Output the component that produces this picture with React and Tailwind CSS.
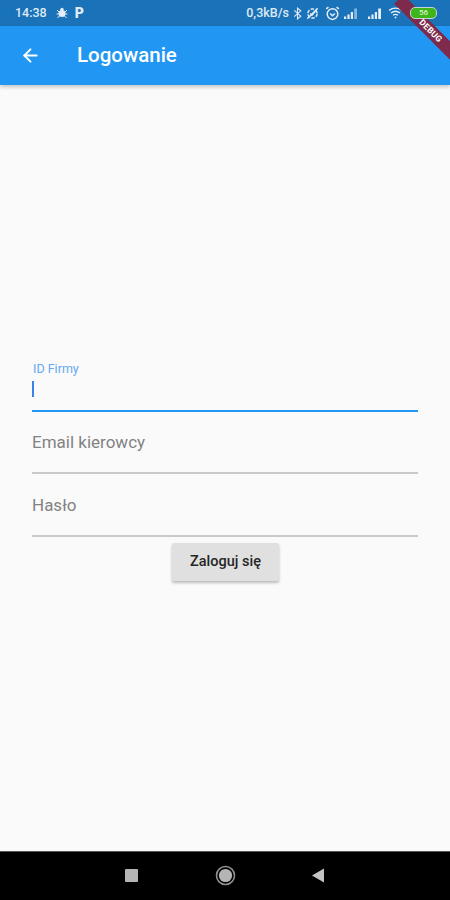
import { ArrowLeft } from 'lucide-react'

function Signal({ full }) {
  return (
    <svg width="15" height="12" viewBox="0 0 15 12" fill="#e3eef8">
      <path d="M1 9.5h2.2V12H1zM4.4 7.5h2.2V12H4.4zM7.8 5h2.2v7H7.8z" />
      <path d="M11.2 1.5h2.8V12h-2.8z" opacity={full ? 1 : 0.55} />
    </svg>
  )
}

function StatusBar() {
  return (
    <div className="h-[26px] bg-[#1a72b8] flex items-center pl-[15px] pr-[13px] text-[#dfeaf5] font-['Roboto',sans-serif]">
      <span className="text-[12.5px] font-medium">14:38</span>
      <svg className="ml-[9px]" width="12" height="12" viewBox="0 0 12 12" fill="#e3eef8">
        <circle cx="6" cy="6.5" r="3.6" />
        <circle cx="6" cy="2.4" r="1.7" />
        <path d="M1 3l2 2M11 3L9 5M.6 7h2M11.4 7h-2M1.4 11l2-2M10.6 11l-2-2" stroke="#e3eef8" strokeWidth="1" />
      </svg>
      <span className="ml-[7px] text-[14px] font-black leading-none">P</span>
      <div className="ml-auto flex items-center">
        <span className="text-[12.5px] font-medium">0,3kB/s</span>
        <svg className="ml-[4px]" width="9" height="13" viewBox="0 0 8 12" fill="none" stroke="#e3eef8" strokeWidth="1">
          <path d="M1 3.2l6 5.3L4 11V1l3 2.5L1 8.8" />
        </svg>
        <svg className="ml-[3px]" width="15" height="15" viewBox="0 0 13 13" fill="none" stroke="#e3eef8" strokeWidth="1.3">
          <circle cx="6.5" cy="6.5" r="4" strokeDasharray="3 1.2" />
          <path d="M4.5 6.5l1.5 1.5 3-3.5M2 11L11 2" />
        </svg>
        <svg className="ml-[5px]" width="15" height="15" viewBox="0 0 13 13" fill="none" stroke="#e3eef8" strokeWidth="1.3">
          <circle cx="6.5" cy="7" r="4.6" />
          <path d="M4.5 6.5l2 2 2-2M1 2.5L3 1M12 2.5L10 1" />
        </svg>
        <div className="ml-[3px]"><Signal /></div>
        <div className="ml-[9px]"><Signal full /></div>
        <svg className="ml-[6px]" width="15" height="12" viewBox="0 0 15 12" fill="none" stroke="#e3eef8" strokeWidth="1.3">
          <path d="M1 3.5C4.8.4 10.2.4 14 3.5M3 6c2.8-2.2 6.2-2.2 9 0M5 8.3c1.6-1.2 3.4-1.2 5 0" />
          <circle cx="7.5" cy="10.5" r="0.9" fill="#e3eef8" stroke="none" />
        </svg>
        {/* room for the battery, which sits over the banner */}
        <div className="ml-[7px] w-[27px]" />
      </div>
    </div>
  )
}

function Field({ label, focused }) {
  return (
    <div className={`mx-[32px] h-[62.5px] flex flex-col justify-end border-b-2 ${focused ? 'border-[#2196f3]' : 'border-[#c9c9c9]'}`}>
      {focused ? (
        <div className="h-[48px] flex flex-col">
          <span className="pl-[1px] text-[12.5px] leading-[14px] text-[#64a9f0]">{label}</span>
          <span className="mt-[5px] w-[2px] h-[16px] bg-[#3b82e8]" />
        </div>
      ) : (
        <span className="text-[17px] leading-[20px] mb-[20px] text-[#828282]">{label}</span>
      )}
    </div>
  )
}

export default function App() {
  return (
    <div className="relative w-[450px] h-[900px] overflow-hidden flex flex-col bg-[#fafafa] font-['Roboto',sans-serif]">
      <StatusBar />
      <header className="h-[59px] bg-[#2196f3] flex items-center shadow-[0_2px_4px_rgba(0,0,0,0.22)] z-10">
        <ArrowLeft className="ml-[20px] text-white" size={21} strokeWidth={2.2} />
        <h1 className="ml-[36px] text-[20.5px] font-medium text-white">Logowanie</h1>
      </header>

      <main className="flex-1 flex flex-col justify-center">
        <div className="mb-[12px] pt-[6px]">
          <Field label="ID Firmy" focused />
          <Field label="Email kierowcy" />
          <Field label="Hasło" />
          <div className="flex justify-center mt-[6px]">
            <button className="ml-[1px] w-[107px] h-[38px] rounded-[2px] bg-[#e0e0e0] text-[14.5px] font-medium text-[#262626] shadow-[0_2px_3px_rgba(0,0,0,0.25)]">
              Zaloguj się
            </button>
          </div>
        </div>
      </main>

      <nav className="h-[49px] bg-black border-t border-[#555] flex items-center">
        <span className="absolute left-[125px] bottom-[18px] w-[13px] h-[13px] rounded-[1px] bg-[#b5b5b5]" />
        <svg className="absolute left-[215px] bottom-[14px]" width="21" height="21" viewBox="0 0 21 21">
          <circle cx="10.5" cy="10.5" r="9" fill="none" stroke="#8f8f8f" strokeWidth="1.6" />
          <circle cx="10.5" cy="10.5" r="6.6" fill="#b5b5b5" />
        </svg>
        <svg className="absolute left-[311px] bottom-[17px]" width="14" height="15" viewBox="0 0 14 15">
          <path d="M13 .5v14L1 7.5z" fill="#c4c4c4" />
        </svg>
      </nav>

      {/* debug banner */}
      <div className="absolute top-[21px] right-[-17px] w-[80px] h-[13px] rotate-45 bg-[#7d2a4c] flex items-center justify-center z-20">
        <span className="ml-[10px] text-[8.5px] font-bold text-white tracking-wide">DEBUG</span>
      </div>

      {/* battery */}
      <div className="absolute top-[7px] left-[410px] w-[27px] h-[12px] rounded-[5px] border border-[#c4d3dc] bg-[#3fb51a] flex items-center justify-center z-30">
        <span className="text-[8px] leading-none font-medium text-[#d9f2cc]">56</span>
      </div>
    </div>
  )
}
